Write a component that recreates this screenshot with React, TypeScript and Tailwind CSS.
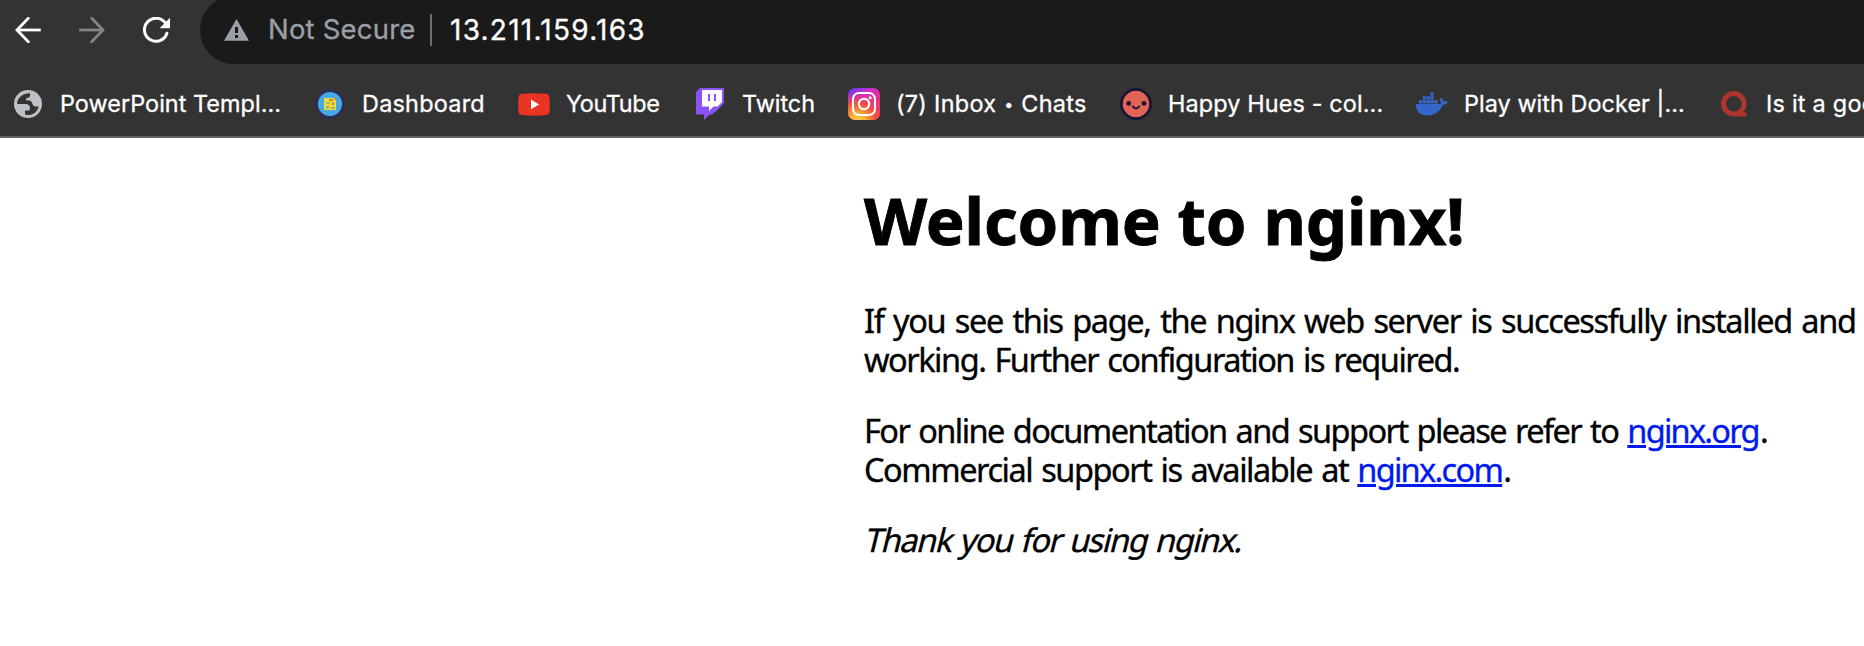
import type { ReactNode } from "react";

function BackIcon({ className }: { className: string }) {
  return (
    <svg className={className} width="26" height="26" viewBox="0 0 26 26" fill="none" stroke="currentColor" strokeWidth="2.8">
      <path d="M25.8 13H2.2" />
      <path d="M13.3 1.3L2 13L13.3 24.7" strokeLinejoin="miter" strokeLinecap="round" />
    </svg>
  );
}

function ReloadIcon() {
  return (
    <svg width="28" height="27" viewBox="0 0 28 27" fill="none">
      <path d="M23 7.2A11.5 11.5 0 1 0 23.9 16.2" stroke="#fff" strokeWidth="3" strokeLinecap="round" />
      <path d="M27 .8V11.2H16.6z" fill="#fff" />
    </svg>
  );
}

function WarningIcon() {
  return (
    <svg width="25" height="22" viewBox="0 0 25 22">
      <path d="M12.5 0L25 21.8H0z" fill="#9aa0a6" />
      <path d="M11 8h3v6h-3zM11 16h3v3h-3z" fill="#1a1a1a" />
    </svg>
  );
}

function GlobeIcon() {
  return (
    <svg width="28" height="28" viewBox="0 0 28 28">
      <circle cx="14" cy="14" r="14" fill="#bdc1c6" />
      <path
        fill="#333"
        d="M3.1 14C3.1 8.2 7.8 3.4 16 3.2V5.4C16 7 14.9 7.9 13.2 7.9H12.2V10.4H14.6C17.5 10.4 18 12.3 18.6 14.2C19.2 15.8 20.2 16.4 21.6 16.4H24.7C23.6 21.4 19.2 25 13.8 25L11 24.6V20.6H13.8C15.4 20.6 16 19.6 16 18.2C16 15.6 14.2 14 11.6 14z"
      />
    </svg>
  );
}

function DashboardIcon() {
  return (
    <svg width="32" height="32" viewBox="0 0 32 32">
      <circle cx="16" cy="16" r="15" fill="#302c58" />
      <circle cx="16" cy="16" r="12" fill="#45a9e6" />
      <path d="M10 10h12v12H10z" fill="#f1d83b" />
      <path d="M12 14h4v2h-4zM12 18h3v3h-3zM17 19h4v2h-4z" fill="#a3bd5a" />
      <path d="M15 11h4v2h-4zM18 14h2v3h-2z" fill="#b79b3a" />
      <path d="M20 10h2v2h-2z" fill="#ee7b3c" />
    </svg>
  );
}

function YouTubeIcon() {
  return (
    <svg width="32" height="23" viewBox="0 0 32 23">
      <path d="M4 .8Q16-.4 28 .8Q31 1 31.4 4Q32.4 11.5 31.4 19Q31 21.8 28 22.1Q16 23.3 4 22.1Q1 21.8.6 19Q-.4 11.5.6 4Q1 1 4 .8z" fill="#e93323" />
      <path d="M13 6.6L21 11.4L13 16.2z" fill="#fff" />
    </svg>
  );
}

function TwitchIcon() {
  return (
    <svg width="32" height="32" viewBox="0 0 32 32">
      <path d="M6 0H30V15L24 21.5L18 26.5H15.5L10 32V26.5H2V4z" fill="#8b53f6" />
      <path d="M8 2H28V14L23.5 18.5H19.5L15 23V18.5H8z" fill="#fff" />
      <path d="M14 6h2v7h-2zM20 6h2v7h-2z" fill="#8b53f6" />
    </svg>
  );
}

function InstagramIcon() {
  return (
    <svg width="32" height="32" viewBox="0 0 32 32">
      <defs>
        <linearGradient id="ig-base" x1="0.1" y1="0" x2="0.9" y2="1">
          <stop offset="0" stopColor="#6a35f5" />
          <stop offset="0.35" stopColor="#d42fc6" />
          <stop offset="0.7" stopColor="#ee2f79" />
          <stop offset="1" stopColor="#ee3a5c" />
        </linearGradient>
        <radialGradient id="ig-warm" cx="0.3" cy="1.05" r="0.95">
          <stop offset="0" stopColor="#fbd449" />
          <stop offset="0.25" stopColor="#f8b53c" />
          <stop offset="0.6" stopColor="#f2503f" />
          <stop offset="1" stopColor="#ee2f79" stopOpacity="0" />
        </radialGradient>
      </defs>
      <rect width="32" height="32" rx="7" fill="url(#ig-base)" />
      <rect width="32" height="32" rx="7" fill="url(#ig-warm)" />
      <g fill="none" stroke="#fff" strokeWidth="2.1">
        <rect x="5" y="5" width="22" height="22" rx="6" />
        <circle cx="16" cy="16" r="5.2" />
      </g>
      <circle cx="22.2" cy="9.8" r="1.5" fill="#fff" />
    </svg>
  );
}

function HappyHuesIcon() {
  return (
    <svg width="32" height="32" viewBox="0 0 32 32">
      <circle cx="16" cy="16" r="14.6" fill="#e16456" stroke="#1d1533" strokeWidth="2.8" />
      <circle cx="8.7" cy="15.4" r="2.4" fill="#1d1533" />
      <circle cx="24" cy="15.4" r="2.4" fill="#1d1533" />
      <path d="M12.8 18.4Q16 22.6 19.4 18.4" fill="none" stroke="#1d1533" strokeWidth="1.9" strokeLinecap="round" />
    </svg>
  );
}

function DockerIcon() {
  return (
    <svg width="32" height="32" viewBox="0 0 32 32" fill="#3465c8">
      <path d="M0 16H22.4Q25 16 25.3 14.4Q23 12.4 24.8 9.4Q27.4 11 27.5 13.2Q30 12.6 32 14Q30.6 16.8 27 16.8C24 23.6 19 27.4 11.4 27.4C3.6 27.4 0 23.4 0 16z" />
      <path d="M3 12h3.3v3.4H3zM6.8 12h3.3v3.4H6.8zM10.6 12h3.3v3.4h-3.3zM14.4 12h3.3v3.4h-3.3zM18.2 12h3.3v3.4h-3.3z" />
      <path d="M6.8 8.2h3.3v3.3H6.8zM10.6 8.2h3.3v3.3h-3.3zM14.4 8.2h3.3v3.3h-3.3zM14.4 4.4h3.3v3.3h-3.3z" />
    </svg>
  );
}

function QuoraIcon() {
  return (
    <svg width="26" height="26" viewBox="0 0 26 26" fill="none">
      <circle cx="12.8" cy="12.8" r="10.3" stroke="#ac362d" strokeWidth="5" />
      <path d="M16 20L20.4 18.6Q21.6 21.8 25.4 21.6V25.4H14z" fill="#ac362d" />
    </svg>
  );
}

type Bookmark = { id: string; label: ReactNode; icon: ReactNode; width: string; spacing: string };

const inboxLabel = (
  <>
    (7) Inbox <span className="mx-px align-[2px] text-[16px] leading-none">•</span> Chats
  </>
);

const bookmarks: Bookmark[] = [
  { id: "powerpoint", label: "PowerPoint Templ...", icon: <GlobeIcon />, width: "w-[302px]", spacing: "tracking-[0.05px]" },
  { id: "dashboard", label: "Dashboard", icon: <DashboardIcon />, width: "w-[204px]", spacing: "tracking-[0.25px]" },
  { id: "youtube", label: "YouTube", icon: <YouTubeIcon />, width: "w-[176px]", spacing: "tracking-[-0.35px]" },
  { id: "twitch", label: "Twitch", icon: <TwitchIcon />, width: "w-[154px]", spacing: "tracking-normal" },
  { id: "inbox", label: inboxLabel, icon: <InstagramIcon />, width: "w-[272px]", spacing: "tracking-[0.3px]" },
  { id: "happyhues", label: "Happy Hues - col...", icon: <HappyHuesIcon />, width: "w-[296px]", spacing: "tracking-[0.13px]" },
  { id: "docker", label: "Play with Docker |...", icon: <DockerIcon />, width: "w-[302px]", spacing: "tracking-[0.06px]" },
  { id: "quora", label: "Is it a good", icon: <QuoraIcon />, width: "w-[302px]", spacing: "tracking-[0.25px]" },
];

function BrowserBar() {
  return (
    <header className="h-[138px] overflow-hidden border-b-2 border-[#666062] bg-[#333333] font-['Inter',sans-serif] text-white [-webkit-text-stroke:0.3px]">
      <div className="flex h-16 items-start">
        <div className="flex h-[60px] w-[200px] shrink-0 items-center pl-[15px]">
          <BackIcon className="text-white" />
          <BackIcon className="ml-[38px] rotate-180 text-[#858585]" />
          <span className="ml-[38px]">
            <ReloadIcon />
          </span>
        </div>
        <div className="-mt-1 flex h-[68px] flex-1 items-center rounded-l-full bg-[#1a1a1a] pl-6 text-[27.5px]">
          <WarningIcon />
          <span className="ml-[19px] w-[162px] whitespace-nowrap tracking-[0.2px] text-[#9aa0a6]">Not Secure</span>
          <span className="h-8 w-0.5 bg-[#6b6d70]" />
          <span className="ml-[18px] whitespace-nowrap text-[28px] tracking-[1.25px]">13.211.159.163</span>
        </div>
      </div>
      <nav className="flex h-20 items-center pl-3">
        {bookmarks.map((b) => (
          <a key={b.id} className={`flex h-8 shrink-0 items-center gap-4 ${b.width}`}>
            <span className="flex size-8 shrink-0 items-center justify-center">{b.icon}</span>
            <span className={`h-8 whitespace-nowrap text-[23.4px] leading-8 ${b.spacing}`}>{b.label}</span>
          </a>
        ))}
      </nav>
    </header>
  );
}

const linkClass = "text-[#0019ee] underline decoration-[3px] underline-offset-[2px]";

export default function App() {
  return (
    <div className="h-[646px] w-full overflow-hidden bg-white">
      <BrowserBar />
      <main className="ml-[864px] whitespace-nowrap pt-[42px] font-['Noto_Sans',sans-serif] text-[32.5px] leading-[39px] text-black [-webkit-text-stroke:0.35px]">
        <h1 className="text-[65.3px] font-bold leading-[80px] tracking-[-0.1px] [-webkit-text-stroke:0.9px]">Welcome to nginx!</h1>
        <p className="mt-[41px]">
          <span className="tracking-[-1.37px] [word-spacing:2.45px]">If you see this page, the nginx web server is successfully installed and</span>
          <br />
          <span className="tracking-[-1.47px] [word-spacing:2.1px]">working. Further configuration is required.</span>
        </p>
        <p className="mt-8">
          <span className="tracking-[-1.55px] [word-spacing:2px]">For online documentation and support please refer to </span>
          <a className={`tracking-[-1.74px] ${linkClass}`}>nginx.org</a>
          <span className="ml-px">.</span>
          <br />
          <span className="tracking-[-1.45px] [word-spacing:2px]">Commercial support is available at </span>
          <a className={`tracking-[-1.69px] ${linkClass}`}>nginx.com</a>
          <span className="ml-px">.</span>
        </p>
        <p className="mt-[31px]">
          <em className="inline-block origin-[0_75%] -skew-x-[14deg] not-italic tracking-[-1.37px] [word-spacing:1.5px]">Thank you for using nginx.</em>
        </p>
      </main>
    </div>
  );
}
